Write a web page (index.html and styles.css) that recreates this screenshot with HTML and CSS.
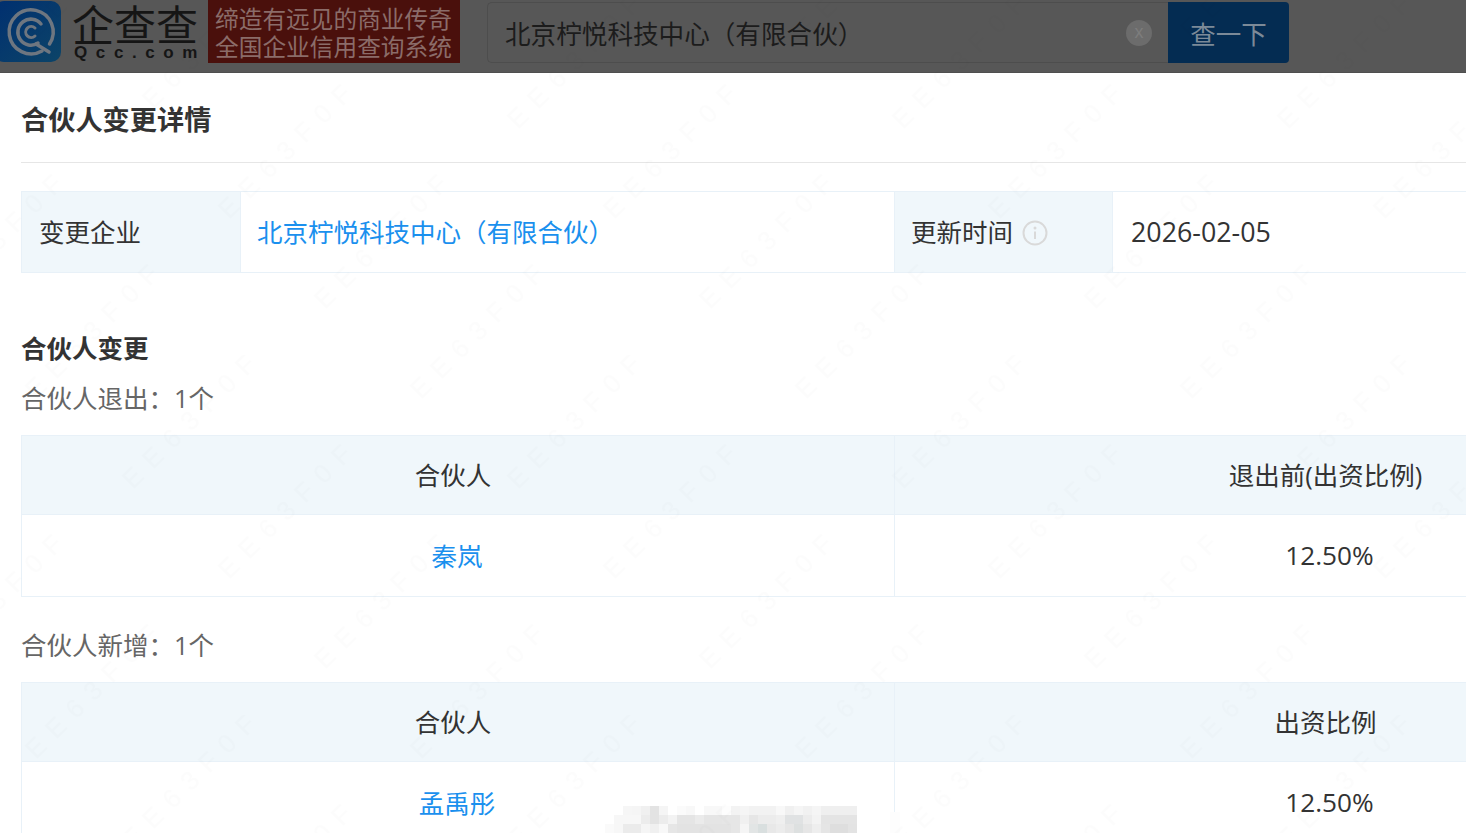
FILE: index.html
```html
<!DOCTYPE html>
<html lang="zh-CN">
<head>
<meta charset="utf-8">
<title>合伙人变更详情</title>
<link rel="stylesheet" href="styles.css">
</head>
<body>
<header class="topbar">
  <div class="logo-mark">
    <svg width="62" height="62" viewBox="0 0 62 62">
      <defs><linearGradient id="lg" x1="0" y1="0" x2="1" y2="1"><stop offset="0" stop-color="#002f70"/><stop offset="1" stop-color="#0c4468"/></linearGradient></defs>
      <rect x="-6" y="1" width="67" height="61" rx="10" fill="url(#lg)"/>
      <g fill="none" stroke="#6e7680" stroke-linecap="round">
        <path d="M42 51A22 22 0 1 1 49.500 44" stroke-width="3.500"/>
        <path d="M38 43A13 13 0 1 1 41 24" stroke-width="3.500"/>
        <path d="M35 36A5.500 5.500 0 1 1 35 28" stroke-width="3"/>
        <path d="M36 44L49 52" stroke-width="3.500"/>
      </g>
    </svg>
  </div>
  <div class="logo-word">
    <div class="logo-cn">企查查</div>
    <div class="logo-en">Qcc.com</div>
  </div>
  <div class="slogan"><span>缔造有远见的商业传奇</span><span>全国企业信用查询系统</span></div>
  <div class="search">
    <div class="search-input">
      <span>北京柠悦科技中心（有限合伙）</span>
      <span class="clear">x</span>
    </div>
    <div class="search-btn">查一下</div>
  </div>
</header>

<main class="content">
  <h1 class="page-title">合伙人变更详情</h1>

  <table class="grid info">
    <tr>
      <th class="label first">变更企业</th>
      <td class="link name">北京柠悦科技中心（有限合伙）</td>
      <th class="label">更新时间 <svg class="info-icon" width="26" height="26" viewBox="0 0 26 26"><circle cx="13" cy="13" r="11.500" fill="none" stroke="#d9d9d9" stroke-width="2"/><circle cx="13" cy="8" r="1.500" fill="#d9d9d9"/><path d="M13 11.500V19" stroke="#d9d9d9" stroke-width="2"/></svg></th>
      <td class="date">2026-02-05</td>
    </tr>
  </table>

  <h2 class="section-title">合伙人变更</h2>

  <p class="sub">合伙人退出：1个</p>
  <table class="grid data">
    <tr><th>合伙人</th><th>退出前(出资比例)</th></tr>
    <tr><td class="link">秦岚</td><td class="num">12.50%</td></tr>
  </table>

  <p class="sub second">合伙人新增：1个</p>
  <table class="grid data">
    <tr><th>合伙人</th><th>出资比例</th></tr>
    <tr><td class="link">孟禹彤</td><td class="num">12.50%</td></tr>
  </table>

  <svg class="mosaic" width="295" height="27" viewBox="0 0 295 27" aria-hidden="true">
    <rect x="285" y="6" width="12" height="21" fill="#fdfdfd"/>
    <g>
      <rect x="18" y="0" width="9" height="9" fill="#f6f6f6"/><rect x="27" y="0" width="9" height="9" fill="#f5f5f5"/><rect x="36" y="0" width="9" height="9" fill="#f0f0f0"/><rect x="45" y="0" width="9" height="9" fill="#e3e3e3"/><rect x="54" y="0" width="9" height="9" fill="#f5f5f5"/><rect x="72" y="0" width="9" height="9" fill="#fbfbfb"/><rect x="81" y="0" width="9" height="9" fill="#f8f8f8"/><rect x="99" y="0" width="18" height="9" fill="#f8f8f8"/><rect x="117" y="0" width="9" height="9" fill="#fdfdfd"/><rect x="126" y="0" width="9" height="9" fill="#f3f3f3"/><rect x="135" y="0" width="9" height="9" fill="#f5f5f5"/><rect x="144" y="0" width="27" height="9" fill="#f2f2f2"/><rect x="171" y="0" width="9" height="9" fill="#f8f8f8"/><rect x="180" y="0" width="9" height="9" fill="#f0f0f0"/><rect x="189" y="0" width="9" height="9" fill="#f5f5f5"/><rect x="198" y="0" width="9" height="9" fill="#f1f1f1"/><rect x="207" y="0" width="9" height="9" fill="#f5f5f5"/><rect x="216" y="0" width="36" height="9" fill="#efefef"/>
    </g>
    <g>
      <rect x="9" y="9" width="27" height="9" fill="#f7f7f7"/><rect x="36" y="9" width="9" height="9" fill="#ececec"/><rect x="45" y="9" width="9" height="9" fill="#e3e3e3"/><rect x="54" y="9" width="9" height="9" fill="#ececec"/><rect x="63" y="9" width="9" height="9" fill="#f3f3f3"/><rect x="72" y="9" width="18" height="9" fill="#e5e5e5"/><rect x="90" y="9" width="9" height="9" fill="#ebebeb"/><rect x="99" y="9" width="18" height="9" fill="#e5e5e5"/><rect x="117" y="9" width="18" height="9" fill="#e6e6e6"/><rect x="135" y="9" width="9" height="9" fill="#f0f0f0"/><rect x="144" y="9" width="9" height="9" fill="#e6e6e6"/><rect x="153" y="9" width="18" height="9" fill="#ececec"/><rect x="171" y="9" width="9" height="9" fill="#efefef"/><rect x="180" y="9" width="18" height="9" fill="#e0e2e3"/><rect x="198" y="9" width="9" height="9" fill="#ececec"/><rect x="207" y="9" width="9" height="9" fill="#f3f3f3"/><rect x="216" y="9" width="36" height="9" fill="#e4e4e4"/>
    </g>
    <g>
      <rect x="0" y="18" width="9" height="9" fill="#fafafa"/><rect x="9" y="18" width="9" height="9" fill="#f7f7f7"/><rect x="18" y="18" width="18" height="9" fill="#ebebeb"/><rect x="36" y="18" width="9" height="9" fill="#f5f5f5"/><rect x="45" y="18" width="9" height="9" fill="#f0f0f0"/><rect x="54" y="18" width="9" height="9" fill="#f8f8f8"/><rect x="63" y="18" width="9" height="9" fill="#e6e6e6"/><rect x="72" y="18" width="54" height="9" fill="#e3e3e3"/><rect x="126" y="18" width="9" height="9" fill="#e6e6e6"/><rect x="135" y="18" width="9" height="9" fill="#f5f5f5"/><rect x="144" y="18" width="9" height="9" fill="#e2e5e5"/><rect x="153" y="18" width="9" height="9" fill="#d9dfdf"/><rect x="162" y="18" width="9" height="9" fill="#e8e8e8"/><rect x="171" y="18" width="9" height="9" fill="#ececec"/><rect x="180" y="18" width="9" height="9" fill="#e6e6e6"/><rect x="189" y="18" width="9" height="9" fill="#dde0e0"/><rect x="198" y="18" width="9" height="9" fill="#e6e6e6"/><rect x="207" y="18" width="9" height="9" fill="#eeeeee"/><rect x="216" y="18" width="9" height="9" fill="#e5e5e5"/><rect x="225" y="18" width="18" height="9" fill="#dedede"/><rect x="243" y="18" width="9" height="9" fill="#e3e3e3"/>
    </g>
  </svg>
</main>

<svg class="watermark" width="1466" height="833" aria-hidden="true">
  <defs>
    <pattern id="wm" width="385" height="360" patternUnits="userSpaceOnUse" patternTransform="translate(118 355)">
      <text class="wm-text" x="15" y="135" transform="rotate(-45 15 135)">EE63F0F</text>
      <text class="wm-text" x="111" y="225" transform="rotate(-45 111 225)">EE63F0F</text>
      <text class="wm-text" x="207" y="315" transform="rotate(-45 207 315)">EE63F0F</text>
      <text class="wm-text" x="303" y="45" transform="rotate(-45 303 45)">EE63F0F</text>
      <text class="wm-text" x="303" y="405" transform="rotate(-45 303 405)">EE63F0F</text>
      <text class="wm-text" x="-82" y="45" transform="rotate(-45 -82 45)">EE63F0F</text>
      <text class="wm-text" x="-82" y="405" transform="rotate(-45 -82 405)">EE63F0F</text>
    </pattern>
  </defs>
  <rect width="1466" height="833" fill="url(#wm)"/>
</svg>
</body>
</html>
```
FILE: styles.css
```css
* { box-sizing: border-box; }
html, body { margin: 0; padding: 0; }
body {
  position: relative;
  width: 1466px;
  height: 833px;
  overflow: hidden;
  background: #fff;
  color: #333;
  font-family: "Open Sans", "Noto Sans CJK SC", sans-serif;
  font-size: 25.500px;
}
.topbar {
  height: 73px;
  background: #575757;
  border-bottom: 1px solid #4f4f4f;
  display: flex;
  align-items: flex-start;
}
.logo-mark { width: 62px; height: 62px; flex: none; }
.logo-mark svg { display: block; }
.logo-word {
  width: 132px;
  margin-left: 10px;
  color: #151515;
  flex: none;
}
.logo-cn {
  font-family: "Noto Sans CJK SC", sans-serif;
  font-size: 42px;
  line-height: 42px;
  height: 44px;
  padding-top: 2px;
  white-space: nowrap;
}
.logo-en {
  font-family: "Liberation Sans", sans-serif;
  font-size: 17px;
  font-weight: 700;
  line-height: 18px;
  letter-spacing: 8.600px;
  margin-left: 2px;
  white-space: nowrap;
}
.slogan {
  width: 252px;
  height: 63px;
  margin-left: 4px;
  background: #4a100c;
  color: #8b6c69;
  font-family: "Noto Sans CJK SC", sans-serif;
  font-size: 23.700px;
  line-height: 28px;
  padding: 4px 0 0 7px;
  display: flex;
  flex-direction: column;
  white-space: nowrap;
  flex: none;
}
.search {
  display: flex;
  margin: 2px 0 0 27px;
  height: 61px;
  width: 802px;
  flex: none;
}
.search-input {
  flex: 1;
  display: flex;
  align-items: center;
  justify-content: space-between;
  padding: 0 16px 0 17px;
  border: 1px solid #4d4d4d;
  border-right: 0;
  border-radius: 5px 0 0 5px;
  color: #1c1c1c;
  font-family: "Noto Sans CJK SC", sans-serif;
  font-size: 25.600px;
}
.clear {
  width: 26px;
  height: 26px;
  border-radius: 50%;
  background: #6c6c6c;
  color: #7d7d7d;
  font-family: "Liberation Sans", sans-serif;
  font-size: 18px;
  line-height: 24px;
  text-align: center;
}
.search-btn {
  width: 121px;
  background: #042c52;
  color: #7c8a98;
  border-radius: 0 4px 4px 0;
  font-family: "Noto Sans CJK SC", sans-serif;
  font-size: 25.500px;
  display: flex;
  align-items: center;
  justify-content: center;
}
.content {
  position: relative;
  padding-left: 21px;
  height: 760px;
  overflow: hidden;
}
.watermark {
  position: absolute;
  left: 0;
  top: 0;
  pointer-events: none;
}
.wm-text {
  font-family: "Liberation Sans", sans-serif;
  font-size: 26px;
  letter-spacing: 11px;
  fill: rgba(0, 0, 0, 0.011);
}
.page-title {
  margin: 0;
  height: 90px;
  width: 1500px;
  padding-top: 27px;
  border-bottom: 1px solid #e6e6e6;
  font-size: 27.200px;
  line-height: 40px;
  font-weight: 700;
  color: #333;
}
.grid {
  border-collapse: collapse;
  table-layout: fixed;
  font-weight: 400;
}
.grid th, .grid td {
  border: 1px solid #e8f1f8;
  font-weight: 400;
  padding: 0;
}
.grid th { background: #f0f7fb; }
.info {
  width: 1500px;
  margin-top: 28px;
}
.info tr { height: 81px; }
.info th, .info td { padding-bottom: 3px; }
.info .label { width: 218px; text-align: left; padding-left: 16px; }
.info .first { width: 219px; padding-left: 17px; }
.info .name { width: 654px; padding-left: 16px; }
.info .date { padding-left: 18px; padding-bottom: 1px; font-size: 26.800px; }
.info-icon { vertical-align: -4px; margin-left: 2px; }
.link { color: #1a90ee; }
.section-title {
  margin: 54px 0 0;
  font-size: 25.500px;
  line-height: 42px;
  font-weight: 700;
  color: #333;
}
.sub {
  margin: 9px 0 17px;
  line-height: 40px;
  color: #666;
}
.sub.second { margin: 28px 0 17px; }
.data {
  width: 1745px;
  text-align: center;
}
.data th, .data td { width: 872px; padding-right: 2px; padding-bottom: 2px; }
.data th:first-child, .data td:first-child { width: 873px; }
.data th { padding-right: 10px; padding-bottom: 3px; }
.data tr:first-child { height: 79px; }
.data tr:last-child { height: 82px; }
.data .num { font-size: 26.200px; }
.mosaic {
  position: absolute;
  left: 605px;
  top: 733px;
}
```
